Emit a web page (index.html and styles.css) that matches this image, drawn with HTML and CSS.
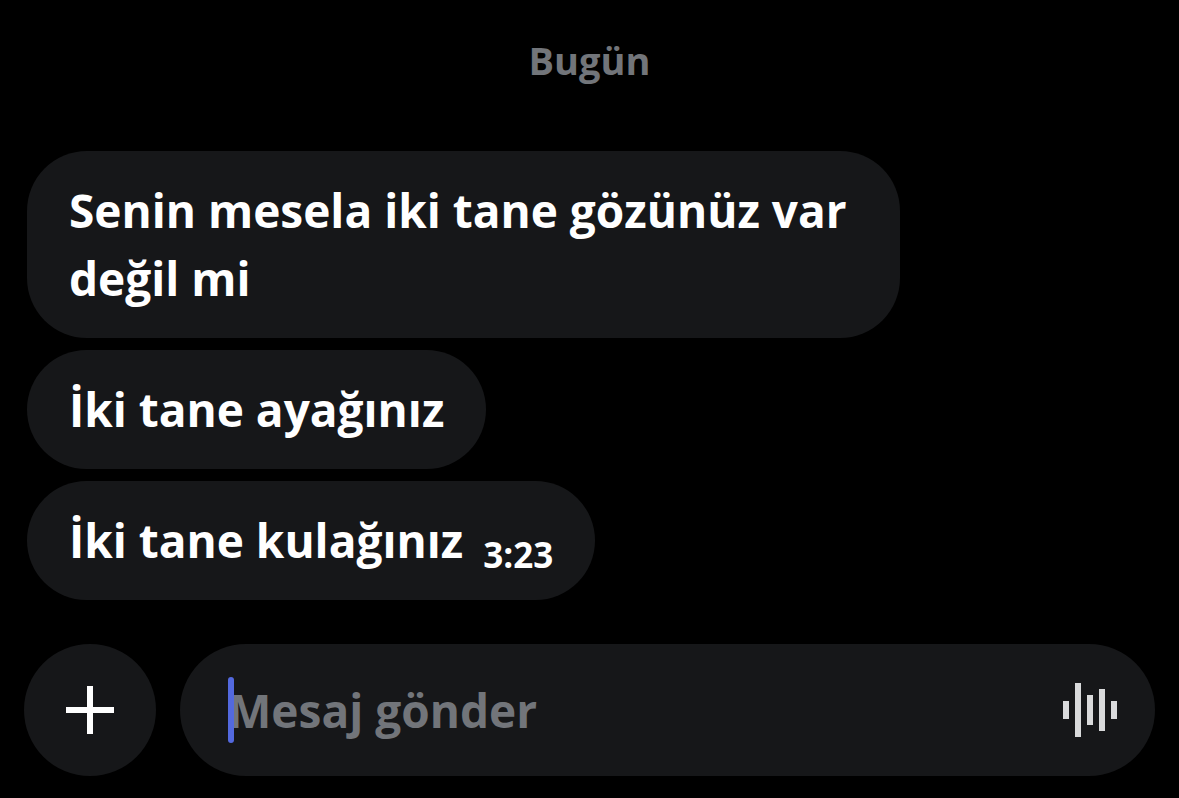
FILE: index.html
```html
<!DOCTYPE html>
<html lang="tr">
<head>
    <meta charset="UTF-8">
    <meta name="viewport" content="width=device-width, initial-scale=1.0">
    <title>Mesajlar</title>
    <link rel="stylesheet" href="styles.css">
</head>
<body>
    <main class="chat">
        <h2 class="chat__day">Bugün</h2>
        <div class="chat__messages">
            <div class="message">
                <p class="message__text">Senin mesela iki tane gözünüz var değil mi</p>
            </div>
            <div class="message">
                <p class="message__text">İki tane ayağınız</p>
            </div>
            <div class="message">
                <p class="message__text">İki tane kulağınız</p>
                <time class="message__time">3:23</time>
            </div>
        </div>
        <form class="composer">
            <button class="composer__add" type="button" aria-label="Ekle">
                <svg width="48" height="48" viewBox="0 0 48 48">
                    <path d="M24 0v48M0 24h48" stroke="#fff" stroke-width="6"/>
                </svg>
            </button>
            <div class="composer__field">
                <span class="composer__caret"></span>
                <input class="composer__input" type="text" placeholder="Mesaj gönder" aria-label="Mesaj gönder">
                <button class="composer__voice" type="button" aria-label="Sesli mesaj">
                    <svg width="54" height="54" viewBox="0 0 54 54">
                        <path d="M3 18v18M15 0v54M27 12v30M39 6v42M51 18v18" stroke="#d9dadb" stroke-width="6"/>
                    </svg>
                </button>
            </div>
        </form>
    </main>
</body>
</html>
```
FILE: styles.css
```css
* {
    box-sizing: border-box;
    margin: 0;
    padding: 0;
}

body {
    font-family: 'Open Sans', 'Noto Sans', sans-serif;
    font-weight: 700;
    background: #000;
    color: #fff;
}

.chat {
    display: flex;
    flex-direction: column;
    min-height: 100vh;
    padding: 34px 24px 22px;
}

.chat__day {
    font-size: 38px;
    line-height: 52px;
    text-align: center;
    color: #72757a;
}

/* MESSAGES */
.chat__messages {
    display: flex;
    flex-direction: column;
    align-items: flex-start;
    gap: 12px;
    margin-top: 65px;
    padding-left: 3px;
}

.message {
    display: flex;
    align-items: flex-end;
    gap: 20px;
    max-width: calc(100% - 255px);
    padding: 25px 42px 26px;
    background: #161719;
    border-radius: 60px;
}

.message__text {
    font-size: 46px;
    line-height: 68px;
}

.message__time {
    font-size: 35px;
    line-height: 38px;
}

/* COMPOSER */
.composer {
    display: flex;
    gap: 24px;
    margin-top: auto;
}

.composer__add {
    display: flex;
    align-items: center;
    justify-content: center;
    flex-shrink: 0;
    width: 132px;
    height: 132px;
    border: none;
    border-radius: 50%;
    background: #161719;
}

.composer__field {
    position: relative;
    display: flex;
    align-items: center;
    flex: 1;
    height: 132px;
    padding: 0 38px 0 48px;
    border-radius: 66px;
    background: #161719;
}

/* sits over the first letter of the placeholder */
.composer__caret {
    position: absolute;
    left: 48px;
    width: 6px;
    height: 66px;
    border-radius: 3px;
    background: #5369de;
}

.composer__input {
    flex: 1;
    min-width: 0;
    border: none;
    outline: none;
    background: transparent;
    font: inherit;
    font-size: 46px;
    color: #fff;
}

.composer__input::placeholder {
    color: #72757a;
    opacity: 1;
}

.composer__voice {
    display: flex;
    border: none;
    background: transparent;
}
```
